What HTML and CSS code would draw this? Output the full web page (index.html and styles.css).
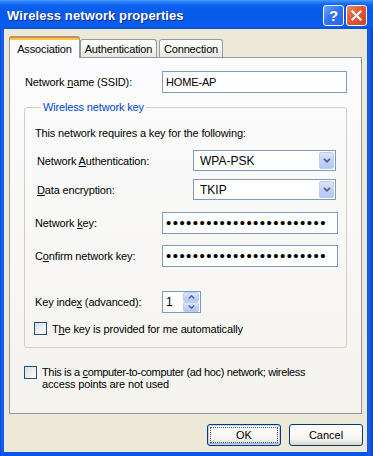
FILE: index.html
```html
<!DOCTYPE html>
<html>
<head>
<meta charset="utf-8">
<link rel="stylesheet" href="styles.css">
</head>
<body>
<div class="window">
  <div class="titlebar">
    <span class="title">Wireless network properties</span>
    <div class="caption-btns">
      <span class="cbtn help">?</span>
      <span class="cbtn close"><svg width="11" height="11" viewBox="0 0 11 11"><path d="M1.5 1.5 L9.5 9.5 M9.5 1.5 L1.5 9.5" stroke="#fff" stroke-width="2.2" stroke-linecap="square"/></svg></span>
    </div>
  </div>
  <div class="client">
    <div class="tabs">
      <div class="tab active">Association</div>
      <div class="tab t-auth">Authentication</div>
      <div class="tab t-conn">Connection</div>
    </div>
    <div class="panel">
      <div class="row ssid-row">
        <span class="lbl lbl-ssid">Network <u>n</u>ame (SSID):</span>
        <div class="field ssid">HOME-AP</div>
      </div>
      <fieldset class="group">
        <legend>Wireless network key</legend>
        <p class="note">This network requires a key for the following:</p>
        <div class="row r-auth">
          <span class="lbl lbl-sel">Network <u>A</u>uthentication:</span>
          <div class="combo"><span class="combo-val">WPA-PSK</span><span class="drop"><svg width="8" height="5" viewBox="0 0 8 5"><path d="M1 0.8 L4 3.8 L7 0.8" fill="none" stroke="#4d6185" stroke-width="1.7"/></svg></span></div>
        </div>
        <div class="row r-data">
          <span class="lbl lbl-sel"><u>D</u>ata encryption:</span>
          <div class="combo"><span class="combo-val">TKIP</span><span class="drop"><svg width="8" height="5" viewBox="0 0 8 5"><path d="M1 0.8 L4 3.8 L7 0.8" fill="none" stroke="#4d6185" stroke-width="1.7"/></svg></span></div>
        </div>
        <div class="row r-key">
          <span class="lbl lbl-in">Network <u>k</u>ey:</span>
          <div class="field pw"><span class="dots">••••••••••••••••••••••••</span></div>
        </div>
        <div class="row r-confirm">
          <span class="lbl lbl-in">C<u>o</u>nfirm network key:</span>
          <div class="field pw"><span class="dots">••••••••••••••••••••••••</span></div>
        </div>
        <div class="row r-index">
          <span class="lbl lbl-in">Key inde<u>x</u> (advanced):</span>
          <div class="field spinner">
            <span class="spin-val">1</span>
            <span class="spin-btns">
              <span class="spin-btn"><svg width="7" height="4" viewBox="0 0 7 4"><path d="M0.8 3.4 L3.5 0.8 L6.2 3.4" fill="none" stroke="#4d6185" stroke-width="1.4"/></svg></span>
              <span class="spin-btn"><svg width="7" height="4" viewBox="0 0 7 4"><path d="M0.8 0.6 L3.5 3.2 L6.2 0.6" fill="none" stroke="#4d6185" stroke-width="1.4"/></svg></span>
            </span>
          </div>
        </div>
        <div class="check r-auto">
          <span class="box"></span>
          <span class="check-text">T<u>h</u>e key is provided for me automatically</span>
        </div>
      </fieldset>
      <div class="check adhoc">
        <span class="box"></span>
        <span class="check-text"><span class="line1">This is a <u>c</u>omputer-to-computer (ad hoc) network; wireless</span><br>access points are not used</span>
      </div>
    </div>
    <div class="buttons">
      <button class="btn default"><span class="focus">OK</span></button>
      <button class="btn">Cancel</button>
    </div>
  </div>
</div>
</body>
</html>
```
FILE: styles.css
```css
html, body {
  margin: 0;
  padding: 0;
}
body {
  width: 373px;
  height: 456px;
  overflow: hidden;
  font-family: "Liberation Sans", Arial, sans-serif;
  font-size: 11px;
  letter-spacing: -0.15px;
  color: #000;
  background: #0a52e4;
}
.window {
  width: 373px;
  height: 456px;
  display: flex;
  flex-direction: column;
  background: linear-gradient(to right, #0845d6 0, #1a64f0 2px, #0a55e6 4px, #0a55e6 367px, #1a5fe8 369px, #0840c8 373px);
}
.titlebar {
  height: 29px;
  flex: none;
  display: flex;
  align-items: center;
  justify-content: space-between;
  padding: 0 6px 0 7px;
  background: linear-gradient(to bottom, #4a9cff 0, #2a7cf8 2px, #0c62f0 5px, #075aea 45%, #085ceb 75%, #0a5eea 90%, #0a50d9 100%);
}
.title {
  color: #fff;
  font-weight: bold;
  font-size: 13px;
  letter-spacing: 0.1px;
  text-shadow: 1px 1px 0 #0b2a96;
  margin-top: 1px;
}
.caption-btns {
  display: flex;
  gap: 2px;
  margin-top: 1px;
}
.cbtn {
  width: 21px;
  height: 21px;
  box-sizing: border-box;
  border: 1px solid #fff;
  border-radius: 3px;
  display: flex;
  align-items: center;
  justify-content: center;
  color: #fff;
}
.help {
  background: linear-gradient(135deg, #6aa4ff 0%, #3474f2 45%, #2a62e0 100%);
  font-weight: bold;
  font-size: 15px;
}
.close {
  background: linear-gradient(135deg, #f08a6c 0%, #e05a36 45%, #cc4520 100%);
}
.client {
  flex: 1;
  margin: 0 6px 4px 4px;
  background: #ece9d8;
  display: flex;
  flex-direction: column;
}
.tabs {
  display: flex;
  align-items: flex-end;
  padding: 7px 0 0 5px;
  height: 21px;
}
.tab {
  box-sizing: border-box;
  height: 18px;
  border: 1px solid #919b9c;
  border-bottom: none;
  border-radius: 3px 3px 0 0;
  background: linear-gradient(#ffffff, #f3f3ef 60%, #e6e5df);
  display: flex;
  align-items: center;
  justify-content: center;
  padding-top: 1px;
}
.tab.active {
  position: relative;
  z-index: 1;
  width: 71px;
  height: 22px;
  margin-bottom: -1px;
  border-color: #919b9c;
  background: linear-gradient(#e68b2c 0, #e68b2c 1px, #ffc73c 1px, #ffc73c 3px, #fcfcfe 3px, #fcfcfe 100%);
  padding-top: 2px;
}
.t-auth {
  width: 77px;
}
.t-conn {
  width: 64px;
  margin-left: 2px;
}
.panel {
  margin: 0 5px 0 5px;
  border: 1px solid #919b9c;
  background: linear-gradient(#fcfcfe, #f4f3ee);
  padding: 13px 14px 23px 14px;
}
.row {
  display: flex;
  align-items: center;
}
.lbl {
  flex: none;
  box-sizing: border-box;
}
.lbl-ssid {
  width: 138px;
  padding-left: 1px;
}
.field {
  box-sizing: border-box;
  height: 22px;
  border: 1px solid #7f9db9;
  background: #fff;
  display: flex;
  align-items: center;
  padding-left: 3px;
}
.ssid {
  width: 185px;
}
.group {
  margin: 7px 0 0 0;
  border: 1px solid #d0d0bf;
  border-radius: 3px;
  padding: 12px 8px 12px 10px;
  min-width: 0;
}
.group legend {
  color: #0046d5;
  padding: 0 2px;
  margin-left: 6px;
  line-height: 14px;
}
.note {
  margin: 0;
  line-height: 14px;
}
.r-auth { margin-top: 10px; }
.r-data { margin-top: 8px; }
.r-key { margin-top: 12px; }
.r-confirm { margin-top: 11px; }
.r-index { margin-top: 24px; }
.lbl-sel {
  width: 158px;
  padding-left: 2px;
}
.lbl-in {
  width: 127px;
}
.combo {
  box-sizing: border-box;
  width: 143px;
  height: 21px;
  border: 1px solid #7f9db9;
  background: #fff;
  display: flex;
  align-items: center;
  justify-content: space-between;
  padding: 1px;
}
.combo-val {
  padding-left: 5px;
  font-size: 12px;
  letter-spacing: 0;
}
.drop {
  width: 15px;
  height: 17px;
  box-sizing: border-box;
  border: 1px solid #bccdf3;
  border-radius: 2px;
  background: linear-gradient(#dce6fd, #c3d3f8 50%, #b4c7f5);
  display: flex;
  align-items: center;
  justify-content: center;
}
.pw {
  width: 176px;
}
.dots {
  font-size: 15px;
  letter-spacing: 1.45px;
  line-height: 18px;
  white-space: nowrap;
  overflow: hidden;
}
.spinner {
  width: 39px;
  justify-content: space-between;
  padding-right: 1px;
}
.spin-val {
  font-size: 12px;
}
.spin-btns {
  display: flex;
  flex-direction: column;
}
.spin-btn {
  width: 16px;
  height: 10px;
  box-sizing: border-box;
  border: 1px solid #bccdf3;
  border-radius: 2px;
  background: linear-gradient(#dce6fd, #c3d3f8 50%, #b4c7f5);
  display: flex;
  align-items: center;
  justify-content: center;
}
.check {
  display: flex;
  align-items: flex-start;
  gap: 5px;
}
.box {
  flex: none;
  width: 13px;
  height: 13px;
  box-sizing: border-box;
  border: 1px solid #1c5180;
  background: linear-gradient(135deg, #dcdcd7, #ffffff);
}
.r-auto {
  margin-top: 9px;
  margin-left: -1px;
  align-items: center;
}
.adhoc {
  margin-top: 18px;
}
.adhoc .check-text {
  line-height: 12px;
}
.line1 {
  letter-spacing: -0.35px;
}
.buttons {
  display: flex;
  justify-content: flex-end;
  gap: 8px;
  margin-top: 10px;
  padding-right: 4px;
}
.btn {
  width: 74px;
  height: 22px;
  box-sizing: border-box;
  border: 1px solid #003c74;
  border-radius: 3px;
  background: linear-gradient(#ffffff, #f5f4ef 70%, #dcd8cc);
  font-family: "Liberation Sans", Arial, sans-serif;
  font-size: 11px;
  color: #000;
  padding: 0;
  display: flex;
  align-items: center;
  justify-content: center;
}
.btn.default {
  box-shadow: inset 0 0 0 1px #c0d3f5, inset 0 -1px 0 1px #9bb7ee;
  padding: 2px;
}
.focus {
  flex: 1;
  align-self: stretch;
  display: flex;
  align-items: center;
  justify-content: center;
  border: 1px dotted #555;
}
```
